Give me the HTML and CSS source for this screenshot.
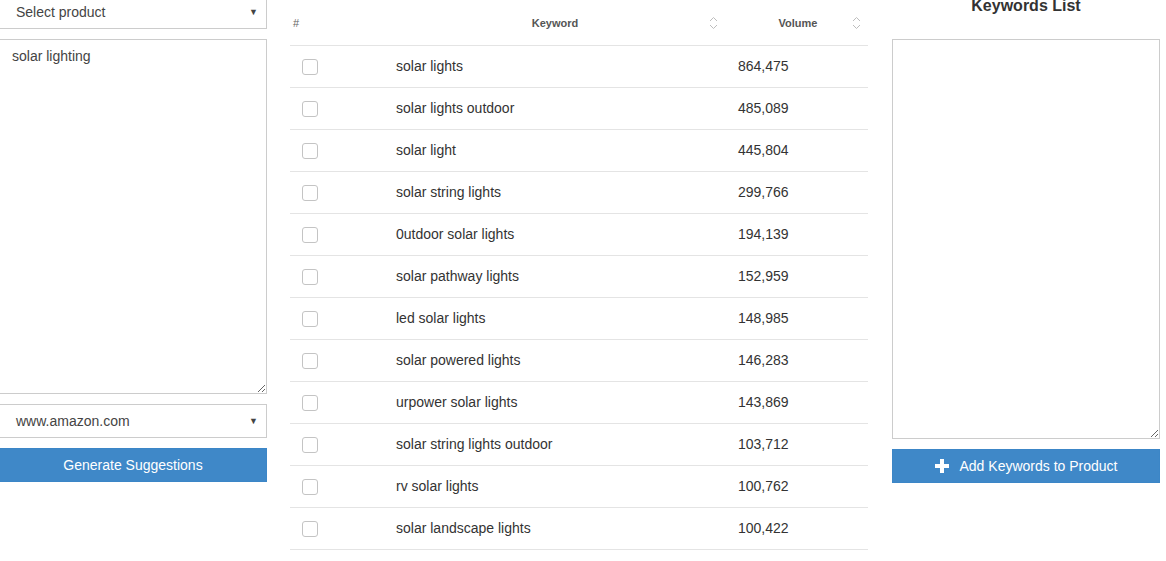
FILE: index.html
```html
<!DOCTYPE html>
<html>
<head>
<meta charset="utf-8">
<link rel="stylesheet" href="styles.css">
</head>
<body>
<div class="page">
  <div class="left-col">
    <div class="select-box"><span>Select product</span><span class="caret">▼</span></div>
    <textarea class="text-area">solar lighting</textarea>
    <div class="select-box"><span>www.amazon.com</span><span class="caret">▼</span></div>
    <button class="btn">Generate Suggestions</button>
  </div>

  <div class="table-col">
    <div class="row head">
      <div class="cell c-num">#</div>
      <div class="cell c-kw">Keyword<svg class="sort" viewBox="0 0 9 14" width="9" height="14"><path d="M1 5 L4.5 1.5 L8 5 M1 9 L4.5 12.5 L8 9" fill="none" stroke="#bdbdbd" stroke-width="1"/></svg></div>
      <div class="cell c-vol">Volume<svg class="sort" viewBox="0 0 9 14" width="9" height="14"><path d="M1 5 L4.5 1.5 L8 5 M1 9 L4.5 12.5 L8 9" fill="none" stroke="#bdbdbd" stroke-width="1"/></svg></div>
    </div>
    <div class="row"><div class="cell c-num"><span class="check"></span></div><div class="cell c-kw">solar lights</div><div class="cell c-vol">864,475</div></div>
    <div class="row"><div class="cell c-num"><span class="check"></span></div><div class="cell c-kw">solar lights outdoor</div><div class="cell c-vol">485,089</div></div>
    <div class="row"><div class="cell c-num"><span class="check"></span></div><div class="cell c-kw">solar light</div><div class="cell c-vol">445,804</div></div>
    <div class="row"><div class="cell c-num"><span class="check"></span></div><div class="cell c-kw">solar string lights</div><div class="cell c-vol">299,766</div></div>
    <div class="row"><div class="cell c-num"><span class="check"></span></div><div class="cell c-kw">0utdoor solar lights</div><div class="cell c-vol">194,139</div></div>
    <div class="row"><div class="cell c-num"><span class="check"></span></div><div class="cell c-kw">solar pathway lights</div><div class="cell c-vol">152,959</div></div>
    <div class="row"><div class="cell c-num"><span class="check"></span></div><div class="cell c-kw">led solar lights</div><div class="cell c-vol">148,985</div></div>
    <div class="row"><div class="cell c-num"><span class="check"></span></div><div class="cell c-kw">solar powered lights</div><div class="cell c-vol">146,283</div></div>
    <div class="row"><div class="cell c-num"><span class="check"></span></div><div class="cell c-kw">urpower solar lights</div><div class="cell c-vol">143,869</div></div>
    <div class="row"><div class="cell c-num"><span class="check"></span></div><div class="cell c-kw">solar string lights outdoor</div><div class="cell c-vol">103,712</div></div>
    <div class="row"><div class="cell c-num"><span class="check"></span></div><div class="cell c-kw">rv solar lights</div><div class="cell c-vol">100,762</div></div>
    <div class="row"><div class="cell c-num"><span class="check"></span></div><div class="cell c-kw">solar landscape lights</div><div class="cell c-vol">100,422</div></div>
  </div>

  <div class="right-col">
    <h3 class="heading">Keywords List</h3>
    <textarea class="text-area list-area"></textarea>
    <button class="btn"><svg class="plus" viewBox="0 0 14 14" width="14" height="14"><path d="M5 0h4v5h5v4H9v5H5V9H0V5h5z" fill="#fff"/></svg>Add Keywords to Product</button>
  </div>
</div>
</body>
</html>
```

FILE: styles.css
```css
html, body {
  margin: 0;
  padding: 0;
  background: #fff;
  overflow: hidden;
}
body {
  font-family: "Liberation Sans", Arial, sans-serif;
  font-size: 14px;
  color: #333;
}
.page {
  display: flex;
  align-items: flex-start;
  width: 1166px;
}
.left-col {
  width: 268px;
  margin-left: -1px;
  margin-top: -5px;
  display: flex;
  flex-direction: column;
  gap: 10px;
}
.select-box {
  box-sizing: border-box;
  height: 34px;
  border: 1px solid #ccc;
  display: flex;
  align-items: center;
  justify-content: space-between;
  padding: 0 8px 0 16px;
  font-size: 14px;
  color: #444;
  background: #fff;
}
.caret {
  font-size: 9px;
  color: #444;
}
.text-area {
  box-sizing: border-box;
  display: block;
  width: 100%;
  height: 355px;
  border: 1px solid #ccc;
  border-radius: 0;
  padding: 8px 12px;
  margin: 0;
  font-family: "Liberation Sans", Arial, sans-serif;
  font-size: 14px;
  color: #444;
  resize: vertical;
  outline: none;
}
.btn {
  box-sizing: border-box;
  height: 34px;
  width: 100%;
  border: 1px solid #3c86c7;
  background: #3f88c8;
  color: #fff;
  font-family: "Liberation Sans", Arial, sans-serif;
  font-size: 14px;
  display: flex;
  align-items: center;
  justify-content: center;
  gap: 11px;
  padding: 0;
  margin: 0;
}
.plus {
  display: block;
}
.table-col {
  width: 578px;
  margin-left: 23px;
}
.row {
  display: flex;
  height: 41px;
  border-bottom: 1px solid #e4e4e4;
  align-items: center;
}
.row.head {
  height: 45px;
  font-size: 11px;
  font-weight: bold;
  color: #555;
}
.cell {
  box-sizing: border-box;
  position: relative;
  display: flex;
  align-items: center;
  height: 100%;
}
.c-num {
  width: 98px;
  padding-left: 12px;
}
.head .c-num {
  padding-left: 3px;
  font-weight: normal;
  color: #666;
}
.c-kw {
  width: 340px;
  padding-left: 8px;
  padding-bottom: 2px;
}
.c-vol {
  width: 140px;
  padding-left: 10px;
  padding-bottom: 2px;
}
.head .c-kw, .head .c-vol {
  justify-content: center;
  padding-left: 0;
  padding-bottom: 0;
}
.head .c-kw {
  padding-right: 6px;
}
.sort {
  position: absolute;
  top: 16px;
}
.c-kw .sort {
  right: 10px;
}
.c-vol .sort {
  right: 7px;
}
.check {
  box-sizing: border-box;
  width: 16px;
  height: 16px;
  border: 1px solid #c4c4c4;
  border-radius: 3px;
  display: block;
  margin-top: 1px;
}
.right-col {
  width: 268px;
  margin-left: 24px;
  display: flex;
  flex-direction: column;
}
.heading {
  margin: -4px 0 0 0;
  height: 20px;
  line-height: 20px;
  font-size: 16px;
  font-weight: bold;
  color: #333;
  text-align: center;
}
.list-area {
  margin-top: 23px;
  height: 400px;
}
.right-col .btn {
  margin-top: 10px;
}
```
